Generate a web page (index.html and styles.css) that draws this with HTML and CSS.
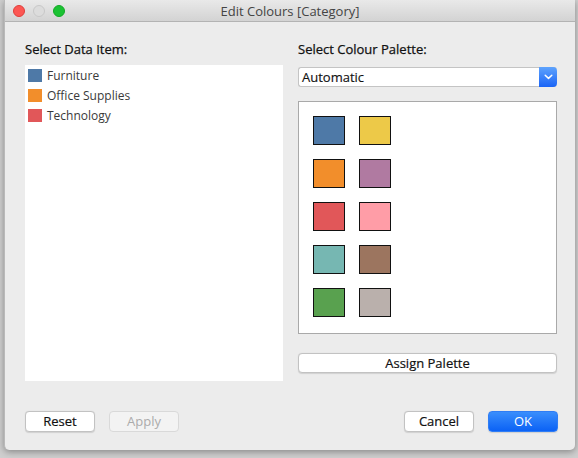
FILE: index.html
```html
<!DOCTYPE html>
<html>
<head>
<meta charset="utf-8">
<link rel="stylesheet" href="styles.css">
</head>
<body>
<div class="window">
  <div class="titlebar">
    <div class="lights">
      <span class="light red"></span>
      <span class="light gray"></span>
      <span class="light green"></span>
    </div>
    <div class="title">Edit Colours [Category]</div>
  </div>
  <div class="content">
    <div class="columns">
      <div class="col">
        <div class="label">Select Data Item:</div>
        <div class="list">
          <div class="item"><span class="chip" style="background:#4e79a7"></span>Furniture</div>
          <div class="item"><span class="chip" style="background:#f28e2b"></span>Office Supplies</div>
          <div class="item"><span class="chip" style="background:#e15759"></span>Technology</div>
        </div>
      </div>
      <div class="col">
        <div class="label">Select Colour Palette:</div>
        <div class="select">
          <span class="select-text">Automatic</span>
          <span class="select-btn">
            <svg width="9" height="6" viewBox="0 0 9 6"><path d="M1.2 1.3 L4.5 4.4 L7.8 1.3" fill="none" stroke="#fff" stroke-width="1.5" stroke-linecap="round" stroke-linejoin="round"/></svg>
          </span>
        </div>
        <div class="palette">
          <div class="swatches">
            <span class="sw" style="background:#4e79a7"></span>
            <span class="sw" style="background:#edc948"></span>
            <span class="sw" style="background:#f28e2b"></span>
            <span class="sw" style="background:#b07aa1"></span>
            <span class="sw" style="background:#e15759"></span>
            <span class="sw" style="background:#ff9da7"></span>
            <span class="sw" style="background:#76b7b2"></span>
            <span class="sw" style="background:#9c755f"></span>
            <span class="sw" style="background:#59a14f"></span>
            <span class="sw" style="background:#bab0ac"></span>
          </div>
        </div>
        <button class="btn assign">Assign Palette</button>
      </div>
    </div>
    <div class="footer">
      <div class="group">
        <button class="btn">Reset</button>
        <button class="btn disabled">Apply</button>
      </div>
      <div class="group right">
        <button class="btn">Cancel</button>
        <button class="btn primary">OK</button>
      </div>
    </div>
  </div>
</div>
</body>
</html>
```

FILE: styles.css
```css
html, body {
  margin: 0;
  padding: 0;
}
body {
  width: 578px;
  height: 458px;
  overflow: hidden;
  background: #cfcfcf;
  font-family: "Open Sans", "DejaVu Sans", sans-serif;
}
.window {
  margin-left: 4px;
  width: 571px;
  height: 450px;
  box-sizing: border-box;
  background: #ececec;
  border-left: 1px solid #b9b9b9;
  border-radius: 0 0 5px 5px;
  box-shadow: 0 2px 7px rgba(0,0,0,0.35);
  display: flex;
  flex-direction: column;
}
.titlebar {
  height: 21px;
  flex: none;
  background: linear-gradient(#e9e9e9, #d3d3d3);
  border-bottom: 1px solid #b3b3b3;
  display: flex;
  align-items: center;
}
.lights {
  display: flex;
  gap: 8px;
  padding-left: 8px;
}
.light {
  width: 12px;
  height: 12px;
  border-radius: 50%;
  box-sizing: border-box;
}
.red { background: #fc5753; border: 1px solid #df3e3a; }
.gray { background: #dcdcdc; border: 1px solid #c8c8c8; }
.green { background: #1bc233; border: 1px solid #12a925; }
.title {
  flex: 1;
  text-align: center;
  font-size: 13px;
  color: #444;
  margin-right: 60px;
  margin-left: 0;
}
.content {
  flex: 1;
  padding: 19px 17px 0 20px;
  display: flex;
  flex-direction: column;
}
.columns {
  display: grid;
  grid-template-columns: 258px 259px;
  column-gap: 15px;
}
.col {
  display: flex;
  flex-direction: column;
}
.label {
  font-size: 13px;
  line-height: 16px;
  color: #111;
  height: 16px;
  -webkit-text-stroke: 0.25px #111;
}
.list {
  margin-top: 8px;
  height: 316px;
  background: #fff;
  padding: 3px 0 0 3px;
  box-sizing: border-box;
}
.item {
  display: flex;
  align-items: center;
  height: 14px;
  margin: 0 0 6px 0;
  font-size: 12px;
  color: #3a3a3a;
}
.chip {
  width: 14px;
  height: 13px;
  margin-right: 5px;
  flex: none;
}
.select {
  margin-top: 10px;
  height: 20px;
  box-sizing: border-box;
  background: #fff;
  border: 1px solid #c4c4c4;
  border-right: none;
  border-radius: 3px;
  display: flex;
  align-items: center;
}
.select-text {
  flex: 1;
  font-size: 13px;
  color: #111;
  padding-left: 3px;
  -webkit-text-stroke: 0.15px #111;
}
.select-btn {
  width: 18px;
  height: 20px;
  margin-top: -1px;
  margin-bottom: -1px;
  border-radius: 0 4px 4px 0;
  background: linear-gradient(#5ea3fd, #1a64f6);
  display: flex;
  align-items: center;
  justify-content: center;
}
.palette {
  margin-top: 14px;
  height: 233px;
  box-sizing: border-box;
  background: #fff;
  border: 1px solid #a9a9a9;
  padding: 14px;
}
.swatches {
  display: grid;
  grid-template-columns: 32px 32px;
  grid-auto-rows: 29px;
  column-gap: 14px;
  row-gap: 14px;
}
.sw {
  box-sizing: border-box;
  border: 1px solid #111;
}
.btn {
  font-family: inherit;
  font-size: 13px;
  color: #111;
  -webkit-text-stroke: 0.2px #111;
  height: 21px;
  padding: 0;
  background: #fff;
  border: 1px solid #c2c2c2;
  border-radius: 4px;
  box-shadow: 0 0.5px 1px rgba(0,0,0,0.12);
  line-height: 19px;
}
.assign {
  margin-top: 19px;
  height: 20px;
  width: 259px;
}
.footer {
  margin-top: 30px;
  display: flex;
  justify-content: space-between;
}
.group {
  display: flex;
  gap: 14px;
}
.group .btn {
  width: 70px;
}
.btn.disabled {
  background: #f3f3f3;
  border-color: #d9d9d9;
  color: #ababab;
  -webkit-text-stroke: 0;
  box-shadow: none;
}
.btn.primary {
  background: linear-gradient(#3a8efc, #0b62f5);
  border-color: #2f7df5;
  color: #fff;
  -webkit-text-stroke: 0;
}
```
